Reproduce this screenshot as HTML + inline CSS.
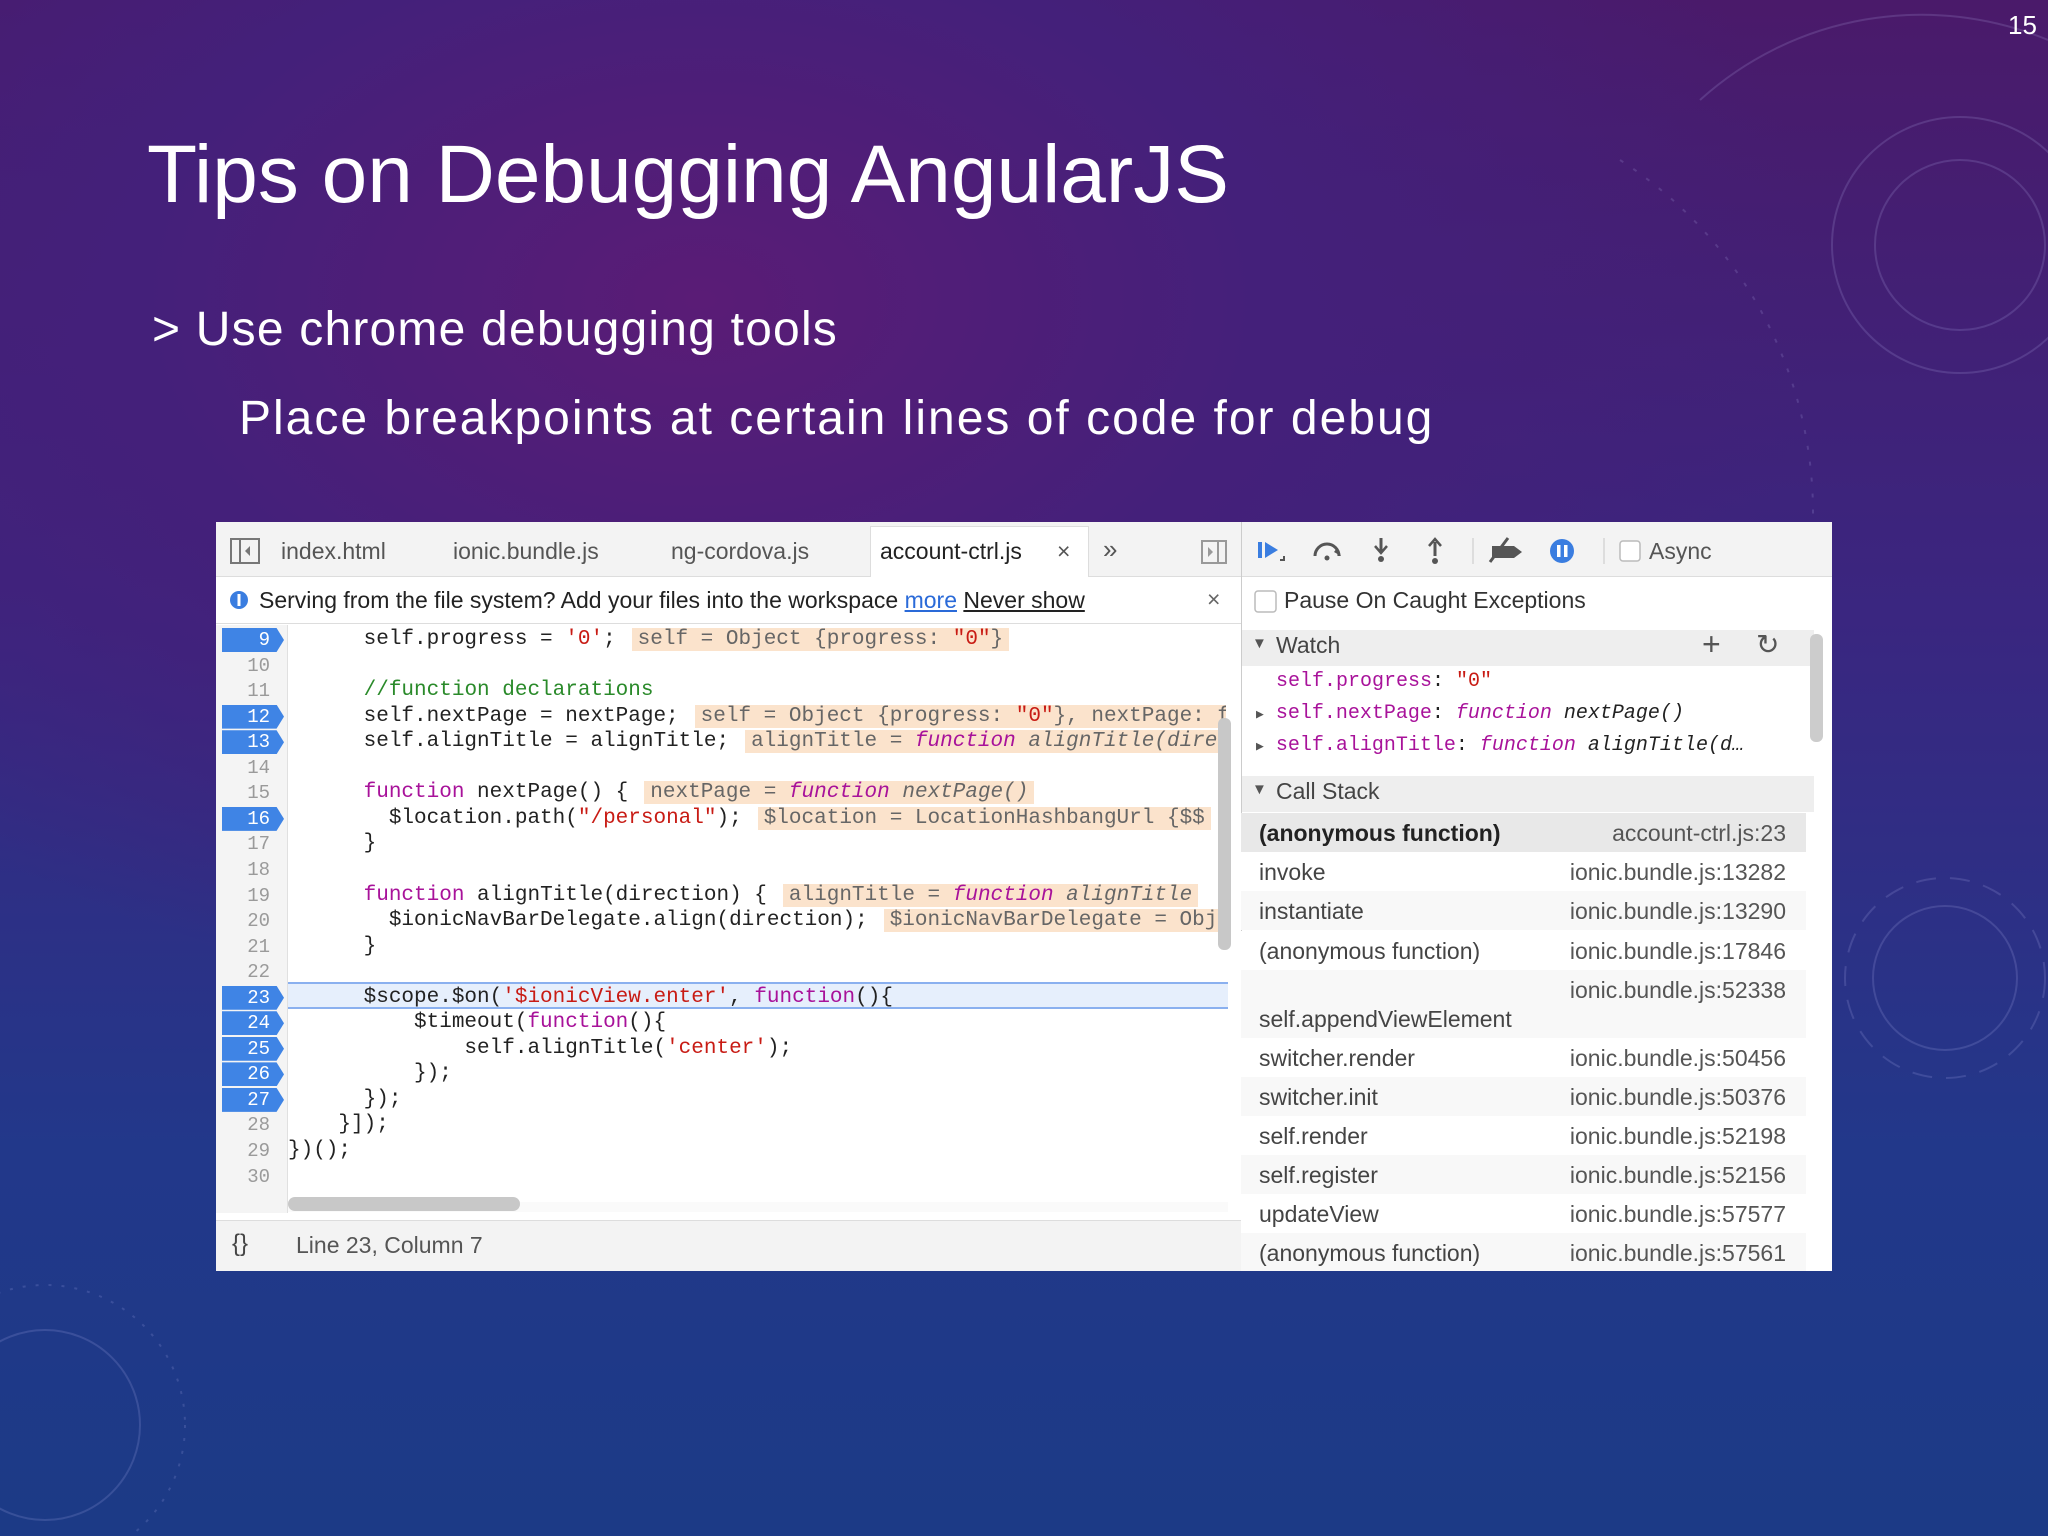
<!DOCTYPE html>
<html><head><meta charset="utf-8">
<style>
*{margin:0;padding:0;box-sizing:border-box}
body{width:2048px;height:1536px;overflow:hidden;position:relative;font-family:"Liberation Sans",sans-serif;
background:radial-gradient(ellipse 1400px 900px at 700px 300px,#5a1c76 0%,#44207a 40%,transparent 80%),linear-gradient(180deg,#4a1a6a 0%,#3a2680 40%,#22388a 75%,#1c3a86 100%);}
.a{position:absolute;white-space:pre}
.t{color:#fff}
.panel{position:absolute;left:216px;top:522px;width:1616px;height:749px;background:#fff;overflow:hidden}
.mono{font-family:"Liberation Mono",monospace;font-size:21px;color:#222}
.ln{position:absolute;left:6px;width:62px;height:24px;text-align:right;padding-right:14px;font-family:"Liberation Mono",monospace;font-size:19px;color:#9a9a9a;line-height:24px}
.bp{background:#3f84e5;color:#fff;clip-path:polygon(0 0,88% 0,100% 50%,88% 100%,0 100%)}
.v{background:#fbe3cc;color:#666;margin-left:16px;padding:0 6px}
.k{color:#a8129a}.s{color:#c81b14}.c{color:#2a8a2a}
.ui{font-size:22px;color:#333}
.row{position:absolute;left:1025px;width:565px;height:39px}
</style></head><body>
<svg class="a" style="left:0;top:0" width="2048" height="1536">
<g fill="none" stroke="rgba(200,200,255,0.16)" stroke-width="2">
<circle cx="1960" cy="245" r="128"/><circle cx="1960" cy="245" r="85"/>
<path d="M1700 100 A330 330 0 0 1 2048 40"/>
<circle cx="1945" cy="978" r="72"/><circle cx="1945" cy="978" r="100" stroke-dasharray="20 14"/>
<circle cx="45" cy="1425" r="95"/><circle cx="45" cy="1425" r="140" stroke-dasharray="3 10"/>
<path d="M1620 160 A420 420 0 0 1 1700 800" stroke-dasharray="4 12"/>
</g></svg>
<div class="a t" style="left:2008px;top:10px;font-size:26px">15</div>
<div class="a t" style="left:147px;top:128px;font-size:82px">Tips on Debugging AngularJS</div>
<div class="a t" style="left:152px;top:302px;font-size:48px;letter-spacing:1.2px">&gt; Use chrome debugging tools</div>
<div class="a t" style="left:239px;top:391px;font-size:48px;letter-spacing:2px">Place breakpoints at certain lines of code for debug</div>

<div class="panel">
 <div class="a" style="left:0;top:0;width:1025px;height:55px;background:#f3f3f3;border-bottom:1px solid #ddd"></div>
 <div class="a" style="left:654px;top:4px;width:219px;height:52px;background:#fff;border:1px solid #ddd;border-bottom:none"></div>
 <svg class="a" style="left:14px;top:16px" width="30" height="26"><rect x="1" y="1" width="28" height="24" fill="none" stroke="#777" stroke-width="2"/><line x1="10" y1="1" x2="10" y2="25" stroke="#777" stroke-width="2"/><path d="M20 8 L15 13 L20 18Z" fill="#777"/></svg>
 <div class="a ui" style="left:65px;top:16px;color:#555;font-size:23px">index.html</div>
 <div class="a ui" style="left:237px;top:16px;color:#555;font-size:23px">ionic.bundle.js</div>
 <div class="a ui" style="left:455px;top:16px;color:#555;font-size:23px">ng-cordova.js</div>
 <div class="a ui" style="left:664px;top:16px;color:#222;font-size:23px">account-ctrl.js</div>
 <div class="a ui" style="left:841px;top:16px;color:#555;font-size:23px">×</div>
 <div class="a ui" style="left:887px;top:12px;color:#555;font-size:26px">»</div>
 <svg class="a" style="left:985px;top:18px" width="26" height="24"><rect x="1" y="1" width="24" height="22" fill="none" stroke="#999" stroke-width="2"/><line x1="17" y1="1" x2="17" y2="23" stroke="#999" stroke-width="2"/><path d="M7 7 L12 12 L7 17Z" fill="#999"/></svg>
 <div class="a" style="left:0;top:55px;width:1025px;height:47px;background:#fff;border-bottom:1px solid #ddd"></div>
 <svg class="a" style="left:13px;top:68px" width="20" height="20"><circle cx="10" cy="10" r="9" fill="#3a7de0"/><rect x="8.5" y="4" width="3" height="12" fill="#fff"/></svg>
 <div class="a ui" style="left:43px;top:65px;font-size:23px;color:#222">Serving from the file system? Add your files into the workspace <span style="color:#2a6ad8;text-decoration:underline">more</span> <span style="text-decoration:underline">Never show</span></div>
 <div class="a ui" style="left:991px;top:64px;color:#666;font-size:23px">×</div>
 <div class="a" style="left:0;top:103px;width:72px;height:588px;background:#f4f4f4;border-right:1px solid #e0e0e0"></div>
 <div class="a" style="left:72px;top:460px;width:940px;height:27px;background:#e6effc;border-top:2px solid #8ab0ef;border-bottom:2px solid #8ab0ef"></div>
 <div id="code"></div>
 <div class="a" style="left:1002px;top:196px;width:13px;height:232px;background:#c8c8c8;border-radius:6px"></div>
 <div class="a" style="left:72px;top:680px;width:940px;height:10px;background:#fafafa"></div>
 <div class="a" style="left:72px;top:675px;width:232px;height:14px;background:#c8c8c8;border-radius:7px"></div>
 <div class="a" style="left:0;top:698px;width:1025px;height:51px;background:#f3f3f3;border-top:1px solid #ddd"></div>
 <div class="a ui" style="left:16px;top:708px;font-size:24px;color:#444">{}</div>
 <div class="a ui" style="left:80px;top:710px;font-size:23px;color:#555">Line 23, Column 7</div>

 <div class="a" style="left:1025px;top:0;width:591px;height:749px;border-left:1px solid #ccc;background:#fff"></div>
 <div class="a" style="left:1026px;top:0;width:590px;height:55px;background:#f3f3f3;border-bottom:1px solid #ddd"></div>
 <svg class="a" style="left:1040px;top:12px" width="420" height="34">
  <rect x="2" y="8" width="4" height="16" fill="#3a7de0"/><path d="M9 8 L22 16 L9 24Z" fill="#3a7de0"/><path d="M24 26 L28 26 L28 22" stroke="#555" stroke-width="2" fill="none"/>
  <path d="M59 22 A12 12 0 0 1 83 22" stroke="#555" stroke-width="3" fill="none"/><path d="M78 18 L85 22 L81 14Z" fill="#555"/><circle cx="71" cy="24" r="2.5" fill="#555"/>
  <line x1="125" y1="4" x2="125" y2="18" stroke="#555" stroke-width="3"/><path d="M119 12 L125 19 L131 12" stroke="#555" stroke-width="2.5" fill="none"/><circle cx="125" cy="25" r="3" fill="#555"/>
  <line x1="179" y1="8" x2="179" y2="22" stroke="#555" stroke-width="3"/><path d="M173 12 L179 5 L185 12" stroke="#555" stroke-width="2.5" fill="none"/><circle cx="179" cy="27" r="3" fill="#555"/>
  <line x1="217" y1="4" x2="217" y2="30" stroke="#ddd" stroke-width="2"/>
  <path d="M236 12 L258 12 L266 18 L258 24 L236 24Z" fill="#555"/><line x1="234" y1="28" x2="252" y2="4" stroke="#555" stroke-width="3"/>
  <circle cx="306" cy="17" r="12" fill="#3a7de0"/><rect x="301" y="11" width="3.5" height="12" fill="#fff"/><rect x="308" y="11" width="3.5" height="12" fill="#fff"/>
  <line x1="348" y1="4" x2="348" y2="30" stroke="#ddd" stroke-width="2"/>
  <rect x="364" y="7" width="20" height="20" rx="3" fill="#fff" stroke="#bbb" stroke-width="1.5"/>
 </svg>
 <div class="a ui" style="left:1433px;top:16px;color:#555;font-size:23px">Async</div>
 <svg class="a" style="left:1038px;top:68px" width="24" height="24"><rect x="1" y="1" width="21" height="21" rx="3" fill="#fff" stroke="#bbb" stroke-width="1.5"/></svg>
 <div class="a ui" style="left:1068px;top:65px;color:#333;font-size:23px">Pause On Caught Exceptions</div>
 <div class="a" style="left:1026px;top:108px;width:572px;height:36px;background:#eeeeee"></div>
 <div class="a ui" style="left:1036px;top:113px;color:#555;font-size:15px">▼</div>
 <div class="a ui" style="left:1060px;top:110px;color:#444;font-size:23px">Watch</div>
 <div class="a ui" style="left:1486px;top:104px;color:#555;font-size:32px">+</div>
 <div class="a ui" style="left:1540px;top:106px;color:#555;font-size:28px">↻</div>
 <div class="a mono" style="left:1060px;top:148px;font-size:20px"><span style="color:#a8129a">self.progress</span>: <span class="s">"0"</span></div>
 <div class="a mono" style="left:1040px;top:180px;font-size:20px"><span style="font-size:13px;color:#555">▶</span> <span style="color:#a8129a">self.nextPage</span>: <i class="k">function</i> <i>nextPage()</i></div>
 <div class="a mono" style="left:1040px;top:212px;font-size:20px"><span style="font-size:13px;color:#555">▶</span> <span style="color:#a8129a">self.alignTitle</span>: <i class="k">function</i> <i>alignTitle(d…</i></div>
 <div class="a" style="left:1026px;top:254px;width:572px;height:36px;background:#eeeeee"></div>
 <div class="a ui" style="left:1036px;top:259px;color:#555;font-size:15px">▼</div>
 <div class="a ui" style="left:1060px;top:256px;color:#444;font-size:23px">Call Stack</div>
 <div id="cs"></div>
 <div class="a" style="left:1594px;top:112px;width:13px;height:108px;background:#ccc;border-radius:6px"></div>
</div>
<script>
var code=[
[9,1,"      self.progress = <span class=s>'0'</span>;<span class=v>self = Object {progress: <span class=s>\"0\"</span>}</span>"],
[10,0,""],[11,0,"      <span class=c>//function declarations</span>"],
[12,1,"      self.nextPage = nextPage;<span class=v>self = Object {progress: <span class=s>\"0\"</span>}, nextPage: function</span>"],
[13,1,"      self.alignTitle = alignTitle;<span class=v>alignTitle = <i class=k>function</i> <i>alignTitle(direction)</i></span>"],
[14,0,""],
[15,0,"      <span class=k>function</span> nextPage() {<span class=v>nextPage = <i class=k>function</i> <i>nextPage()</i></span>"],
[16,1,"        $location.path(<span class=s>\"/personal\"</span>);<span class=v>$location = LocationHashbangUrl {$$</span>"],
[17,0,"      }"],[18,0,""],
[19,0,"      <span class=k>function</span> alignTitle(direction) {<span class=v>alignTitle = <i class=k>function</i> <i>alignTitle</i></span>"],
[20,0,"        $ionicNavBarDelegate.align(direction);<span class=v>$ionicNavBarDelegate = Obj</span>"],
[21,0,"      }"],[22,0,""],
[23,1,"      $scope.$on(<span class=s>'$ionicView.enter'</span>, <span class=k>function</span>(){"],
[24,1,"          $timeout(<span class=k>function</span>(){"],
[25,1,"              self.alignTitle(<span class=s>'center'</span>);"],
[26,1,"          });"],[27,1,"      });"],[28,0,"    }]);"],[29,0,"})();"],[30,0,""]];
var h="";
code.forEach(function(c){var y=118+(c[0]-9)*25.55;
h+='<div class="ln'+(c[1]?' bp':'')+'" style="top:'+(y-12)+'px">'+c[0]+'</div>';
h+='<div class="a mono" style="left:72px;top:'+(y-13)+'px;width:938px;overflow:hidden;line-height:26px">'+c[2]+'</div>';});
document.getElementById('code').innerHTML=h;
var cs=[["(anonymous function)","account-ctrl.js:23",832],["invoke","ionic.bundle.js:13282",871],["instantiate","ionic.bundle.js:13290",910],["(anonymous function)","ionic.bundle.js:17846",950],["","ionic.bundle.js:52338",989],["switcher.render","ionic.bundle.js:50456",1057],["switcher.init","ionic.bundle.js:50376",1096],["self.render","ionic.bundle.js:52198",1135],["self.register","ionic.bundle.js:52156",1174],["updateView","ionic.bundle.js:57577",1213],["(anonymous function)","ionic.bundle.js:57561",1252]];
h="";
cs.forEach(function(r,i){var top=r[2]-522-19;var hh=(i==4)?68:39;
var bg=i==0?'#e8e8e8':(i%2?'#fff':'#f8f8f8');
h+='<div class="row" style="top:'+top+'px;height:'+hh+'px;background:'+bg+'"></div>';
h+='<div class="a ui" style="left:1043px;top:'+(top+7)+'px;font-size:23px;color:'+(i==0?'#222':'#444')+';'+(i==0?'font-weight:bold':'')+'">'+r[0]+'</div>';
h+='<div class="a ui" style="left:1290px;width:280px;text-align:right;top:'+(top+7)+'px;font-size:23px;color:#555">'+r[1]+'</div>';
if(i==4)h+='<div class="a ui" style="left:1043px;top:'+(top+36)+'px;font-size:23px;color:#444">self.appendViewElement</div>';});
document.getElementById('cs').innerHTML=h;
</script>
</body></html>
